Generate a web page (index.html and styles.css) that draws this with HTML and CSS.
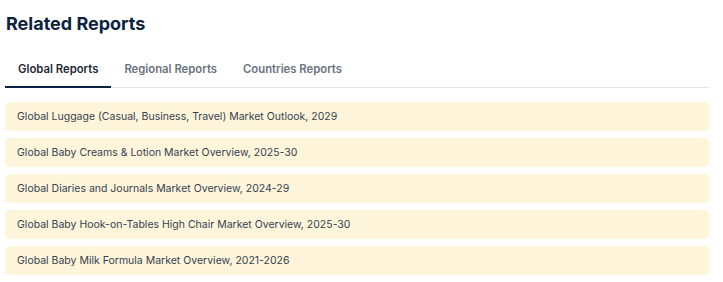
FILE: index.html
```html
<!DOCTYPE html>
<html lang="en">
<head>
    <meta charset="UTF-8">
    <meta name="viewport" content="width=device-width, initial-scale=1.0">
    <title>Related Reports</title>
    <link rel="stylesheet" href="styles.css">
</head>
<body>
    <section class="related">
        <h2 class="related-title">Related Reports</h2>
        <nav class="tabs">
            <button class="tab active">Global Reports</button>
            <button class="tab">Regional Reports</button>
            <button class="tab">Countries Reports</button>
        </nav>
        <ul class="report-list">
            <li class="report">Global Luggage (Casual, Business, Travel) Market Outlook, 2029</li>
            <li class="report">Global Baby Creams &amp; Lotion Market Overview, 2025-30</li>
            <li class="report">Global Diaries and Journals Market Overview, 2024-29</li>
            <li class="report">Global Baby Hook-on-Tables High Chair Market Overview, 2025-30</li>
            <li class="report">Global Baby Milk Formula Market Overview, 2021-2026</li>
        </ul>
    </section>
</body>
</html>
```

FILE: styles.css
```css
body {
    margin: 0;
    font-family: Inter, "Noto Sans", sans-serif;
    background-color: #fff;
}

.related {
    width: 704px;
    padding: 12px 0 0 5px;
}

.related-title {
    margin: 0 0 0 1px;
    font-size: 18px;
    font-weight: 700;
    line-height: 24px;
    color: #0c2340;
}

.tabs {
    display: flex;
    margin-top: 26px;
    border-bottom: 1px solid #e6e6e6;
}

.tab {
    background: none;
    border: none;
    border-bottom: 2px solid transparent;
    margin-bottom: -1px;
    padding: 0 13px 9px 13px;
    font-family: inherit;
    font-size: 11.3px;
    font-weight: 600;
    line-height: 15px;
    color: #6b7280;
    cursor: pointer;
}

.tab.active {
    color: #1f2937;
    border-bottom-color: #0c2340;
}

.report-list {
    list-style: none;
    margin: 14px 0 0 0;
    padding: 0;
    display: flex;
    flex-direction: column;
    gap: 7px;
}

.report {
    background-color: #fef5da;
    border-radius: 5px;
    padding: 7px 12px;
    font-size: 10.5px;
    line-height: 15px;
    color: #374151;
}
```
